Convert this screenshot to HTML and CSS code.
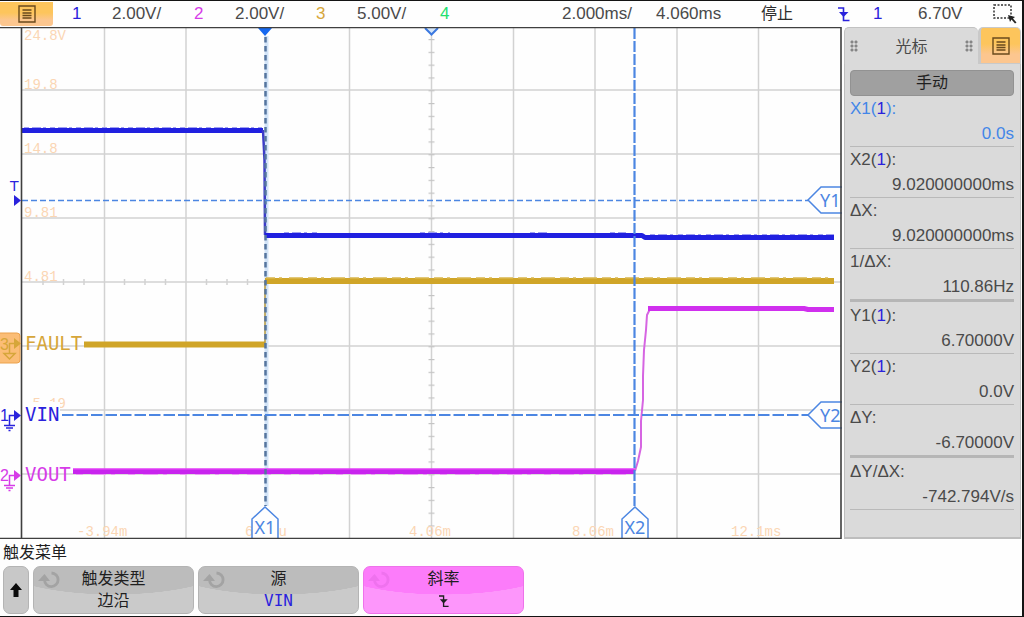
FILE: index.html
```html
<!DOCTYPE html>
<html lang="zh-CN">
<head>
<meta charset="utf-8">
<meta name="viewport" content="width=device-width, initial-scale=1">
<title>示波器</title>
<link rel="stylesheet" href="styles.css">
</head>
<body>
<svg class="defs" aria-hidden="true">
  <symbol id="menu" viewBox="0 0 18 18"><path d="M1 1H17V17H1ZM4.500 5H13.500M4.500 8H13.500M4.500 10.500H13.500M4.500 13H13.500" fill="none" stroke="currentColor" stroke-width="1.4"/></symbol>
  <symbol id="edge" viewBox="0 0 12 16"><path d="M0 2H5.500V14.500H11.500" fill="none" stroke="currentColor" stroke-width="1.6"/><path d="M1 6H10.500L5.500 11Z" fill="currentColor"/></symbol>
  <symbol id="knob" viewBox="0 0 24 20"><path d="M13.500 3A6.800 6.800 0 1 1 6.500 10" fill="none" stroke="currentColor" stroke-width="2.8"/><path d="M0 11L6.500 4L12 11Z" fill="currentColor"/></symbol>
</svg>

<header class="status">
  <button class="menu-button" type="button" aria-label="菜单"><svg class="menu-icon"><use href="#menu"/></svg></button>
  <span class="ch1">1</span><span>2.00V/</span>
  <span class="ch2">2</span><span>2.00V/</span>
  <span class="ch3">3</span><span>5.00V/</span>
  <span class="ch4">4</span>
  <span>2.000ms/</span><span>4.060ms</span><span class="run-state">停止</span>
  <span class="ch1"><svg class="edge-icon"><use href="#edge"/></svg></span>
  <span class="ch1">1</span><span>6.70V</span>
  <button class="select-button" type="button" aria-label="选择区域">
    <svg class="select-icon" viewBox="0 0 24 20"><path d="M1 1H18V14H1Z" fill="none" stroke="#333" stroke-width="1.5" stroke-dasharray="2 1.500"/><path d="M15 11L22 13L20 14.500L23.500 18.500L22 19.500L18.500 15.500L17 18Z" fill="#222"/></svg>
  </button>
</header>

<main class="scope">
  <svg class="plot" viewBox="0 27 842 512" role="img" aria-label="波形">
    <defs>
      <pattern id="vticks" x="427" y="26.200" width="9" height="12.800" patternUnits="userSpaceOnUse"><path d="M1.500 0.600H7.500" stroke="#c4c4c4" stroke-width="1.2"/></pattern>
    </defs>
    <g class="grid">
      <path d="M104.500 28V538M186 28V538M349.500 28V538M431.500 28V538M513.500 28V538M595 28V538M677 28V538M758.500 28V538"/>
      <path d="M22 90H841M22 154H841M22 218H841M22 282H841M22 346H841M22 410H841M22 474H841"/>
      <path d="M43 279V285M63.500 279V285M84 279V285M124.500 279V285M145 279V285M165.500 279V285M206.500 279V285M227 279V285M247.500 279V285"/>
    </g>
    <rect x="427" y="38" width="9" height="492" fill="url(#vticks)"/>

    <g class="scale">
      <text x="24" y="40">24.8V</text>
      <text x="24" y="89">19.8</text>
      <text x="24" y="153">14.8</text>
      <text x="24" y="217">9.81</text>
      <text x="24" y="281">4.81</text>
      <text x="24" y="408">-5.19</text>
      <text x="77" y="536">-3.94m</text>
      <text x="245" y="536">60.0u</text>
      <text x="409" y="536">4.06m</text>
      <text x="572" y="536">8.06m</text>
      <text x="731" y="536">12.1ms</text>
    </g>
    <path d="M22 402H60V426H22Z" fill="#fefefe"/>

    <path d="M266.500 36V506" stroke="#d3e4f7" stroke-width="4"/>

    <g fill="none" stroke-linejoin="round">
      <path d="M84 344.500H265" stroke="#d0a528" stroke-width="6"/>
      <path d="M265 345V281" stroke="#b99a3c" stroke-width="1.5"/>
      <path d="M265 281H834" stroke="#d0a528" stroke-width="6"/>
      <path d="M266 278H834" stroke="#d9b64d" stroke-width="1.5" stroke-dasharray="9 4 3 7 14 5"/>
      <path d="M22 130.500H263" stroke="#2020e0" stroke-width="5"/>
      <path d="M24 127.500H262" stroke="#a0a0f2" stroke-width="1" stroke-dasharray="5 3 9 2 3 4"/>
      <path d="M263 130L264.500 160L265 235" stroke="#3c3cc8" stroke-width="2.5"/>
      <path d="M265 235.500H642L645 237.500H834" stroke="#2020e0" stroke-width="5"/>
      <path d="M284 232.500H320M420 232.500H450M530 232.500H550M610 232.500H626M650 234.500H834" stroke="#a0a0f2" stroke-width="1" stroke-dasharray="5 3 9 3 3 5"/>
      <path d="M73 471.500H635" stroke="#c824ee" stroke-width="5"/>
      <path d="M73 469H635" stroke="#e23cf6" stroke-width="1.5"/>
      <path d="M76 474.500H630" stroke="#ec9cf6" stroke-width="1" stroke-dasharray="7 8 15 5 4 13"/>
      <path d="M635 471L638 461L641 447V421L643 400V376L644 350L646 330L647 315L650 309" stroke="#d665e2" stroke-width="2"/>
      <path d="M648 308.500H804L808 309.500H834" stroke="#d030ee" stroke-width="5"/>
    </g>

    <g class="cursor">
      <path d="M265.500 37V506" stroke="#56759f" stroke-width="2.5" stroke-dasharray="5.500 3.500" class="x1"/>
      <path d="M634.500 28V506" stroke-width="2.2" stroke-dasharray="11 2"/>
      <path d="M22 200.500H808" stroke-width="1.6" stroke-dasharray="6 3"/>
      <path d="M62 415H808" stroke-width="2" stroke-dasharray="11.500 3"/>
      <path d="M252 539V519L265 507L278 519V539M622 539V519L635 507L648 519V539M842 187H821L808 200L821 213H842M842 402H821L808 415L821 428H842" stroke-width="1.5" class="tag"/>
      <text x="265" y="534" text-anchor="middle">X1</text>
      <text x="635" y="534" text-anchor="middle">X2</text>
      <text x="820" y="207">Y1</text>
      <text x="820" y="422">Y2</text>
    </g>
    <path d="M258 28H272L265 36Z" fill="#1668f0"/>
    <path d="M425 28L431.500 34.500L438 28" fill="#d5e6f8" stroke="#3b78e0" stroke-width="2"/>
    <path d="M0 27.500H841V538.500H0M21.500 27V538" fill="none" stroke="#3f3f3f" stroke-width="1.6"/>

    <g class="ch1">
      <text class="trigger" x="10" y="191">T</text>
      <path d="M14 195L21 200.500L14 206Z" fill="currentColor"/>
      <text class="number" x="0" y="421">1</text>
      <path d="M14 410L21 415.500L14 421Z" fill="currentColor"/>
      <path d="M14 415.500H9.500V425M4 425.500H15M6 428H13M8.500 430.500H10.500" class="ground"/>
      <text class="label" x="25" y="421">VIN</text>
    </g>
    <g class="ch2">
      <text class="number" x="0" y="481">2</text>
      <path d="M14 470L21 475.500L14 481Z" fill="currentColor"/>
      <path d="M14 475.500H9.500V485M4 485.500H15M6 488H13M8.500 490.500H10.500" class="ground"/>
      <text class="label" x="25" y="481">VOUT</text>
    </g>
    <g class="ch3">
      <rect x="-4" y="333" width="24" height="30" rx="3" fill="#fbbd76" stroke="#eca24d"/>
      <text class="number" x="0" y="350">3</text>
      <path d="M14 338L21 343.500L14 349Z" fill="currentColor"/>
      <path d="M14 343.500H9.500V353M4 353.500H15L9.500 359Z" class="ground"/>
      <text class="label" x="25" y="350">FAULT</text>
    </g>
  </svg>

  <aside class="panel">
    <div class="tabs">
      <div class="tab"><span class="grip"></span><h2 class="tab-title">光标</h2><span class="grip"></span></div>
      <button class="panel-menu" type="button" aria-label="光标菜单"><svg class="menu-icon"><use href="#menu"/></svg></button>
    </div>
    <div class="panel-body">
      <button class="mode" type="button">手动</button>
      <dl class="readings">
        <div class="reading active"><dt>X1(<span class="ch1">1</span>):</dt><dd>0.0s</dd></div>
        <div class="reading"><dt>X2(<span class="ch1">1</span>):</dt><dd>9.020000000ms</dd></div>
        <div class="reading"><dt>ΔX:</dt><dd>9.020000000ms</dd></div>
        <div class="reading group-end"><dt>1/ΔX:</dt><dd>110.86Hz</dd></div>
        <div class="reading"><dt>Y1(<span class="ch1">1</span>):</dt><dd>6.70000V</dd></div>
        <div class="reading"><dt>Y2(<span class="ch1">1</span>):</dt><dd>0.0V</dd></div>
        <div class="reading group-end"><dt>ΔY:</dt><dd>-6.70000V</dd></div>
        <div class="reading"><dt>ΔY/ΔX:</dt><dd>-742.794V/s</dd></div>
      </dl>
    </div>
  </aside>
</main>

<footer class="softmenu">
  <h1 class="softmenu-title">触发菜单</h1>
  <div class="keys">
    <button class="key back" type="button" aria-label="返回"><svg class="up-icon" viewBox="0 0 12 14"><path d="M6 0L12 7H8.500V14H3.500V7H0Z" fill="#0b0b0b"/></svg></button>
    <button class="key" type="button"><svg class="knob-icon"><use href="#knob"/></svg><span>触发类型</span><span>边沿</span></button>
    <button class="key" type="button"><svg class="knob-icon"><use href="#knob"/></svg><span>源</span><span class="source">VIN</span></button>
    <button class="key selected" type="button"><svg class="knob-icon"><use href="#knob"/></svg><span>斜率</span><span class="slope"><svg class="slope-icon"><use href="#edge"/></svg></span></button>
  </div>
</footer>
</body>
</html>
```
FILE: styles.css
```css
* { box-sizing: border-box; }

body {
  margin: 0;
  min-height: 100vh;
  display: flex;
  flex-direction: column;
  background: #fefefe;
  border: solid #141414;
  border-width: 1px 2px 2px 0;
  color: #4a4a4a;
  font: 17px/25px "Liberation Sans", "Noto Sans CJK SC", sans-serif;
}

button {
  margin: 0;
  padding: 0;
  border: 0;
  background: none;
  color: inherit;
  font: inherit;
}

.defs { position: absolute; width: 0; height: 0; }
.ch1 { color: #2a22dc; }
.ch2 { color: #d63ce8; }
.ch3 { color: #d6a63a; }
.ch4 { color: #22e070; }

.status {
  display: grid;
  grid-template-columns: 72fr 40fr 82fr 41fr 81fr 41fr 83fr 122fr 94fr 105fr 77fr 35fr 45fr 75fr 29fr;
  align-items: center;
  height: 26px;
  padding-bottom: 2px;
  white-space: nowrap;
}
.status > * { min-width: 0; }

.menu-button, .panel-menu {
  display: grid;
  place-items: center;
  background: linear-gradient(#fdc55c 45%, #fcc68f 75%);
  color: #6a4a1c;
}
.menu-button {
  width: 53px;
  height: 24px;
  border-radius: 0 0 3px 3px;
}
.menu-icon { width: 18px; height: 18px; }
.edge-icon { display: block; width: 12px; height: 16px; }
.run-state { color: #2d2d2d; font-size: 16px; }
.select-button { height: 20px; text-align: left; }
.select-icon { display: block; width: 24px; height: 20px; }

.scope { display: flex; align-items: stretch; }
.plot { flex: 1; min-width: 0; display: block; overflow: hidden; }

.grid { fill: none; stroke: #d2d2d2; stroke-width: 1.5; }
.scale { fill: #fbd6b4; font: 14px "Liberation Mono", monospace; }
.cursor { fill: none; stroke: #4c86e2; }
.tag { fill: #fefefe; }
.x1 { stroke: #56759f; }
.cursor text { fill: #4c86e2; stroke: none; font: 18px "Noto Sans", sans-serif; }
.label { fill: currentColor; font: 19px "DejaVu Sans Mono", monospace; }
.number { fill: currentColor; font: 16px "Liberation Sans", sans-serif; }
.trigger { fill: currentColor; font: 14px "DejaVu Sans", sans-serif; }
.ground { fill: none; stroke: currentColor; stroke-width: 1.5; }

.panel {
  flex: 0 0 180px;
  display: flex;
  flex-direction: column;
  padding: 0 1px 0 2px;
}
.tabs { display: flex; background: #fefefe; }
.tab {
  flex: 1;
  display: flex;
  align-items: center;
  justify-content: space-between;
  height: 37px;
  padding: 0 5px;
  background: #dadada;
  border: solid #c2c2c2;
  border-width: 1px 0 0 1px;
  border-radius: 5px 5px 0 0;
}
.tab-title { margin: 0; font-size: 16px; font-weight: 400; }
.grip {
  width: 8px;
  height: 12px;
  background: radial-gradient(circle, #858585 1px, transparent 2px) 0 0 / 4px 4px;
}
.panel-menu {
  width: 43px;
  height: 37px;
  border: solid #c9c9c9;
  border-width: 1px 1px 1px 3px;
  border-radius: 5px 5px 0 0;
}
.panel-body {
  flex: 1;
  padding: 6px 6px 0 5px;
  background: #dadada;
  border: solid #bdbdbd;
  border-width: 0 1px 2px;
}
.mode {
  display: block;
  width: 100%;
  height: 26px;
  background: #a0a0a0;
  border: 1px solid #929292;
  border-radius: 4px;
  color: #1f1f1f;
  font-size: 16px;
  line-height: 24px;
}
.readings { margin: 0; }
.reading { border-bottom: 1px solid #b9b9b9; }
.reading dd { margin: 0; text-align: right; }
.active { color: #4386e8; }
.group-end { border-bottom: 3px solid #b6b6b6; margin-bottom: 1px; }

.softmenu { padding: 1px 0 2px 3px; color: #1f1f1f; }
.softmenu-title { margin: 0; font-size: 16px; font-weight: 400; line-height: 26px; }
.keys {
  display: grid;
  grid-template-columns: 26px repeat(6, minmax(0, 1fr));
  gap: 4px;
  padding-right: 3px;
}
.key {
  position: relative;
  display: flex;
  flex-direction: column;
  align-items: center;
  justify-content: center;
  height: 48px;
  background: radial-gradient(ellipse 75% 70% at 50% -10%, #bcbcbc 99%, #cacaca 100%);
  border: 1px solid #b4b4b4;
  border-radius: 7px;
  font-size: 16px;
  line-height: 22px;
}
.back { background: #c8c8c8; }
.up-icon { width: 12px; height: 14px; }
.knob-icon {
  position: absolute;
  left: 4px;
  top: 3px;
  width: 24px;
  height: 20px;
  color: #a3a3a3;
}
.source { color: #2a22dc; font-family: "DejaVu Sans Mono", monospace; }
.selected {
  background: radial-gradient(ellipse 75% 70% at 50% -10%, #fc7cfa 99%, #fd96fb 100%);
  border-color: #ee72ea;
}
.selected .knob-icon { color: #ef72ee; }
.slope { display: grid; place-items: center; height: 22px; }
.slope-icon { width: 10px; height: 14px; }
```
